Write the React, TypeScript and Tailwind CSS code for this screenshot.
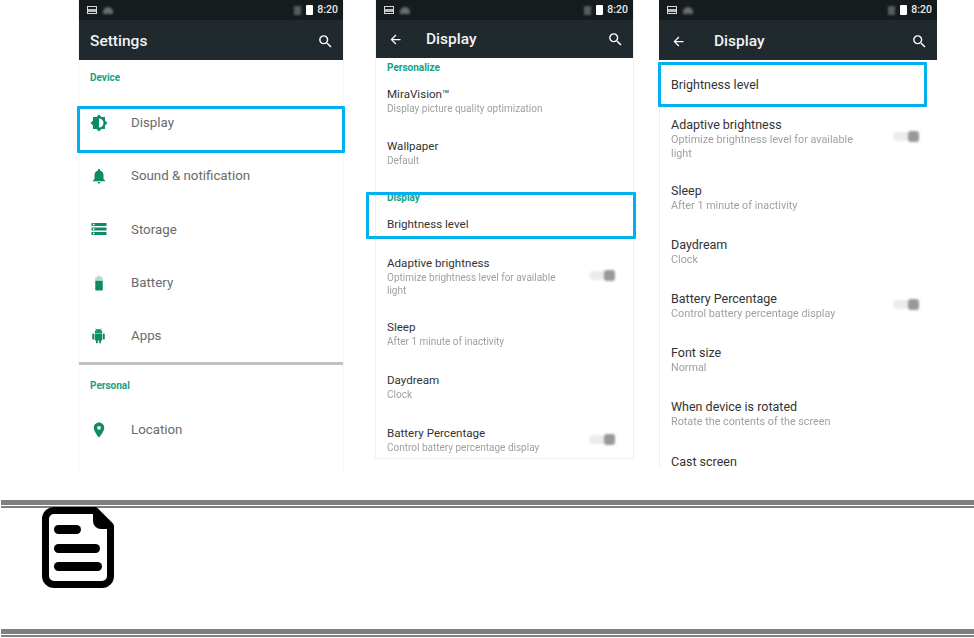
import { MdArrowBack, MdBattery80, MdBrightnessMedium, MdLocationOn, MdNotifications, MdSearch, MdStorage } from "react-icons/md";
import type { ReactNode } from "react";

const font = { fontFamily: "Roboto, sans-serif" };

function StatusBar({ right }: { right: string }) {
  return (
    <div className={`flex h-[20px] items-center bg-[#161b1e] pl-[8px] ${right}`}>
      <div className="h-[8px] w-[10px] border border-[#d8d8d8]">
        <div className="mt-[2px] h-[3px] bg-[#bbbbbb]" />
      </div>
      <div className="ml-[6px] h-[7px] w-[10px] rounded-t-full bg-[#666d70] blur-[1px]" />
      <div className="ml-auto h-[9px] w-[7px] bg-[#565c5f] blur-[1px]" />
      <div className="ml-[5px] h-[10px] w-[7px] rounded-[1px] bg-white" />
      <span className="ml-[4px] text-[10.5px] font-medium text-[#e8e8e8]">8:20</span>
    </div>
  );
}

function Toolbar({ title, back, height, right, bar, gap }: { title: string; back?: boolean; height: string; right: string; bar: string; gap?: string }) {
  return (
    <div className={`bg-[#1f292e] ${height}`}>
      <StatusBar right={right} />
      <div className={`flex items-center pr-[9px] ${back ? "pl-[12px]" : "pl-[11px]"} ${bar}`}>
        {back && <MdArrowBack className={`text-[15px] text-white ${gap ?? ""}`} />}
        <span className="text-[15.5px] font-medium text-[#f2f2f2]">{title}</span>
        <MdSearch className="ml-auto text-[17px] text-white" />
      </div>
    </div>
  );
}

// older android glyph, the one in the reference, react-icons only ships the head
function AndroidIcon() {
  return (
    <svg viewBox="0 0 24 24" fill="currentColor" className="ml-[1px] h-[16px] w-[15px]">
      <path d="M6 18c0 .55.45 1 1 1h1v3.5c0 .83.67 1.5 1.5 1.5s1.5-.67 1.5-1.5V19h2v3.5c0 .83.67 1.5 1.5 1.5s1.5-.67 1.5-1.5V19h1c.55 0 1-.45 1-1V8H6v10zM3.5 8C2.67 8 2 8.67 2 9.5v7c0 .83.67 1.5 1.5 1.5S5 17.33 5 16.5v-7C5 8.67 4.33 8 3.5 8zm17 0c-.83 0-1.5.67-1.5 1.5v7c0 .83.67 1.5 1.5 1.5s1.5-.67 1.5-1.5v-7c0-.83-.67-1.5-1.5-1.5zm-4.97-5.84l1.3-1.3c.2-.2.2-.51 0-.71-.2-.2-.51-.2-.71 0l-1.48 1.48C13.85 1.23 12.95 1 12 1c-.96 0-1.86.23-2.66.63L7.85.15c-.2-.2-.51-.2-.71 0-.2.2-.2.51 0 .71l1.31 1.31C6.97 3.26 6 5.01 6 7h12c0-1.99-.97-3.75-2.47-4.84zM10 5H9V4h1v1zm5 0h-1V4h1v1z" />
    </svg>
  );
}

function MenuRow({ icon, label }: { icon: ReactNode; label: string }) {
  return (
    <div className="flex h-[53.4px] items-center pl-[11px]">
      <div className="w-[41px] text-[18px] text-[#0d8a68]">{icon}</div>
      <span className="text-[13.3px] text-[#6a6a6a]">{label}</span>
    </div>
  );
}

function Toggle() {
  return (
    <div className="relative h-[9px] w-[26px] rounded-full bg-[#ececec] blur-[1px]">
      <div className="absolute right-0 top-[-1px] h-[11px] w-[11px] rounded-[3px] bg-[#999999]" />
    </div>
  );
}

type PrefRowProps = {
  title: string;
  sub?: string;
  toggle?: string;
  height: string;
  large?: boolean;
};

function PrefRow({ title, sub, toggle, height, large }: PrefRowProps) {
  return (
    <div className={`flex items-start justify-between pr-[18px] ${height}`}>
      <div className={large ? "w-[200px]" : "w-[185px]"}>
        <div className={large ? "text-[12.5px] leading-[16px] text-[#333333]" : "text-[11.6px] leading-[15px] text-[#333333]"}>{title}</div>
        {sub && (
          <div className={large ? "text-[10.8px] leading-[14px] text-[#a0a0a0] blur-[0.3px]" : "text-[10px] leading-[13px] text-[#a0a0a0] blur-[0.3px]"}>
            {sub}
          </div>
        )}
      </div>
      {toggle && <div className={toggle}><Toggle /></div>}
    </div>
  );
}

function SectionLabel({ children, className }: { children: ReactNode; className?: string }) {
  return <div className={`text-[10px] font-bold leading-[12px] text-[#16a085] ${className ?? ""}`}>{children}</div>;
}

function Highlight({ className }: { className: string }) {
  return <div className={`absolute border-[3px] border-[#00b0f0] ${className}`} />;
}

function SettingsPhone() {
  return (
    <div className="relative h-[474px] w-[266px] border-x border-[#f6f6f6]">
      <Toolbar title="Settings" height="h-[60px]" right="pr-[5px]" bar="pt-[10px]" />
      <SectionLabel className="mt-[12px] pl-[11px]">Device</SectionLabel>
      <div className="mt-[12px]">
        <MenuRow icon={<MdBrightnessMedium />} label="Display" />
        <MenuRow icon={<MdNotifications />} label="Sound & notification" />
        <MenuRow icon={<MdStorage />} label="Storage" />
        <MenuRow icon={<MdBattery80 />} label="Battery" />
        <MenuRow icon={<AndroidIcon />} label="Apps" />
      </div>
      <div className="mt-[-1px] h-[3px] bg-[#c4c0c0]" />
      <SectionLabel className="mt-[15px] pl-[11px]">Personal</SectionLabel>
      <div className="mt-[11px]">
        <MenuRow icon={<MdLocationOn />} label="Location" />
      </div>
      <Highlight className="left-[-2px] right-[-2px] top-[106px] h-[47px] rounded-[1px]" />
    </div>
  );
}

function DisplayPhone() {
  return (
    <div className="relative ml-[31px] h-[459px] w-[259px] border border-t-0 border-[#f0f0f0]">
      <Toolbar title="Display" back height="h-[58px]" right="pr-[5px]" bar="pt-[8px]" gap="mr-[23px]" />
      <div className="pl-[11px]">
        <SectionLabel className="mt-[4px]">Personalize</SectionLabel>
        <PrefRow title="MiraVision™" sub="Display picture quality optimization" height="h-[65px] pt-[13px]" />
        <PrefRow title="Wallpaper" sub="Default" height="h-[53px]" />
        <SectionLabel>Display</SectionLabel>
        <PrefRow title="Brightness level" height="h-[52px] pt-[13px]" />
        <PrefRow title="Adaptive brightness" sub="Optimize brightness level for available light" toggle="mt-[15px]" height="h-[64px]" />
        <PrefRow title="Sleep" sub="After 1 minute of inactivity" height="h-[53px]" />
        <PrefRow title="Daydream" sub="Clock" height="h-[53px]" />
        <PrefRow title="Battery Percentage" sub="Control battery percentage display" toggle="mt-[9px]" height="h-[29px]" />
      </div>
      <Highlight className="left-[-10px] right-[-3px] top-[192px] h-[47px] rounded-[1px]" />
    </div>
  );
}

function BrightnessPhone() {
  return (
    <div className="relative ml-[25px] h-[474px] w-[278px]">
      <Toolbar title="Display" back height="h-[60px]" right="pr-[5px]" bar="pt-[10px]" gap="mr-[28px]" />
      <div className="border-l border-[#f0f0f0] pl-[11px]">
        <PrefRow large title="Brightness level" height="h-[57px] pt-[17px]" />
        <PrefRow large title="Adaptive brightness" sub="Optimize brightness level for available light" toggle="mt-[15px]" height="h-[66px]" />
        <PrefRow large title="Sleep" sub="After 1 minute of inactivity" height="h-[54px]" />
        <PrefRow large title="Daydream" sub="Clock" height="h-[54px]" />
        <PrefRow large title="Battery Percentage" sub="Control battery percentage display" toggle="mt-[9px]" height="h-[54px]" />
        <PrefRow large title="Font size" sub="Normal" height="h-[54px]" />
        <PrefRow large title="When device is rotated" sub="Rotate the contents of the screen" height="h-[55px]" />
        <PrefRow large title="Cast screen" height="h-[13px]" />
      </div>
      <Highlight className="left-[-1px] top-[62px] h-[45px] w-[269px] rounded-[1px]" />
    </div>
  );
}

function NoteIcon() {
  return (
    <svg width="72" height="81" viewBox="0 0 72 81" className="ml-[42px] mt-[-1px]">
      <path d="M12 3.5H53L68.5 19V69A8.5 8.5 0 0 1 60 77.5H12A8.5 8.5 0 0 1 3.5 69V12A8.5 8.5 0 0 1 12 3.5Z" fill="#fff" stroke="#000" strokeWidth="7" strokeLinejoin="round" />
      <path d="M51 2L71 22H59A8 8 0 0 1 51 14Z" fill="#000" />
      <rect x="12" y="18" width="27" height="9" rx="4.5" />
      <rect x="12" y="37" width="46" height="9" rx="4.5" />
      <rect x="12" y="55" width="48" height="9" rx="4.5" />
    </svg>
  );
}

function Rule() {
  return (
    <div className="ml-[1px]">
      <div className="h-[5px] bg-[#808080]" />
      <div className="mt-[1px] h-[2px] bg-[#808080]" />
    </div>
  );
}

export default function App() {
  return (
    <div className="h-[638px] w-[974px] overflow-hidden bg-white" style={font}>
      <div className="flex h-[500px] items-start pl-[78px]">
        <SettingsPhone />
        <DisplayPhone />
        <BrightnessPhone />
      </div>
      <Rule />
      <div className="h-[122px]">
        <NoteIcon />
      </div>
      <Rule />
    </div>
  );
}
